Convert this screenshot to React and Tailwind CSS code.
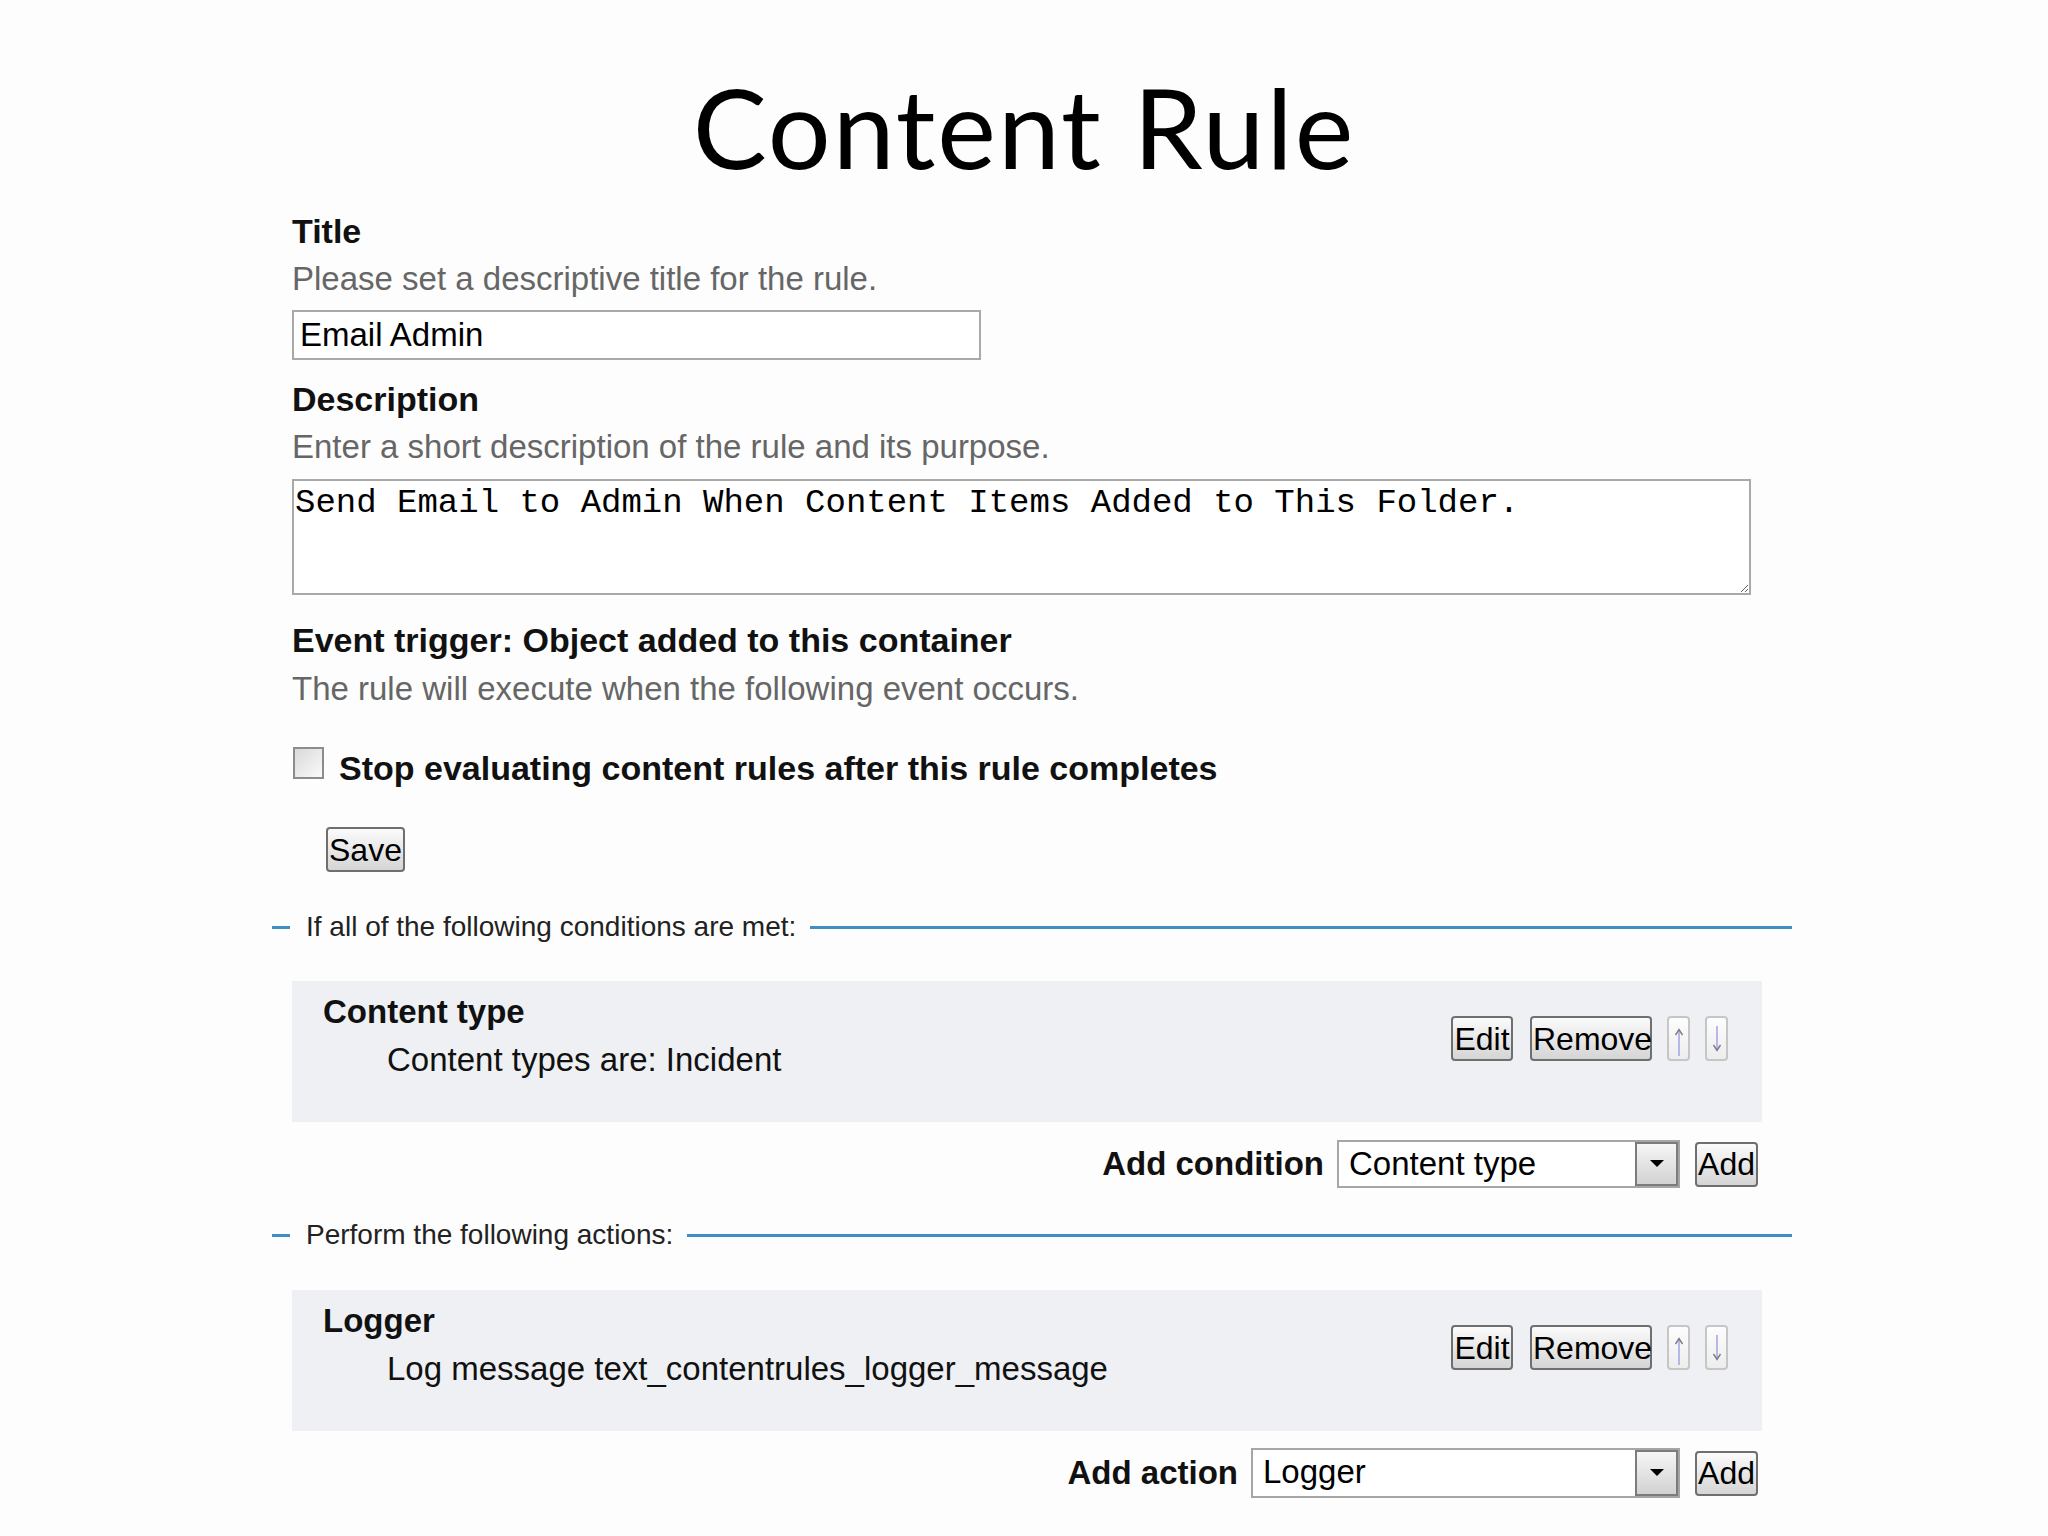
import React from "react";

const Btn = ({ children, className = "" }) => (
  <button
    className={
      "h-[45px] rounded-[4px] border-2 border-[#6f6f6f] bg-linear-to-b from-[#fbfbfb] to-[#d5d5d5] px-[1px] text-[32px] leading-none text-black " +
      className
    }
  >
    {children}
  </button>
);

const ArrowBtn = ({ up, className = "" }) => (
  <div
    className={
      "flex h-[45px] w-[23px] items-center justify-center rounded-[4px] border-2 border-[#c6c6c6] bg-linear-to-b from-[#fdfdfd] to-[#ededed] " +
      className
    }
  >
    <svg width="14" height="38" viewBox="0 0 14 38">
      {up ? (
        <>
          <line x1="7" y1="36" x2="7" y2="10" stroke="#a7a7e6" strokeWidth="1.6" />
          <path d="M3.5 15 L7 9.5 L10.5 15" fill="none" stroke="#7a7a8a" strokeWidth="1.4" />
        </>
      ) : (
        <>
          <line x1="7" y1="6" x2="7" y2="30" stroke="#a7a7e6" strokeWidth="1.6" />
          <path d="M3.5 25 L7 30.5 L10.5 25" fill="none" stroke="#7a7a8a" strokeWidth="1.4" />
        </>
      )}
    </svg>
  </div>
);

const Select = ({ value, className = "" }) => (
  <div className={"flex border-2 border-[#a6a6a6] bg-white " + className}>
    <div className="flex-1 pl-[10px] text-[33px] leading-[44px] text-black">{value}</div>
    <div className="flex w-[43px] items-center justify-center border-2 border-[#7c7c7c] bg-linear-to-b from-[#f6f6f6] to-[#d2d2d2]">
      <svg width="14" height="8" viewBox="0 0 14 8">
        <path d="M0 0 H14 L7 7 Z" fill="#000" />
      </svg>
    </div>
  </div>
);

const Legend = ({ children, className = "" }) => (
  <div className={"flex h-[40px] items-center " + className}>
    <div className="h-[3px] w-[18px] bg-[#3f8fc6]" />
    <div className="ml-[16px] text-[28px] leading-[40px] text-[#222]">{children}</div>
    <div className="ml-[14px] h-[3px] flex-1 bg-[#3f8fc6]" />
  </div>
);

const RuleBox = ({ title, text, className = "" }) => (
  <div className={"ml-[20px] flex h-[141px] w-[1470px] justify-between bg-[#eef0f3] " + className}>
    <div className="pl-[31px] pt-[11px]">
      <div className="text-[33px] font-bold leading-[40px]">{title}</div>
      <div className="ml-[64px] mt-[8px] text-[33px] leading-[40px]">{text}</div>
    </div>
    <div className="flex items-start pr-[34px] pt-[35px]">
      <Btn className="w-[62px]">Edit</Btn>
      <Btn className="ml-[17px] w-[122px]">Remove</Btn>
      <ArrowBtn up className="ml-[15px]" />
      <ArrowBtn className="ml-[15px]" />
    </div>
  </div>
);

export default function App() {
  return (
    <div className="min-h-[1536px] bg-[#fdfdfd] font-['Liberation_Sans',Arial,sans-serif] text-[#111]">
      <h1 className="pt-[61px] text-center font-['Lato',sans-serif] text-[111px] font-normal leading-[130px] tracking-[2px] text-black">
        Content Rule
      </h1>

      <div className="ml-[272px] w-[1520px]">
        <div className="pl-[20px]">
          <div className="mt-[20px] text-[34px] font-bold leading-[40px]">Title</div>
          <div className="mt-[8px] text-[33px] leading-[40px] text-[#666]">
            Please set a descriptive title for the rule.
          </div>
          <input
            readOnly
            defaultValue="Email Admin"
            className="mt-[11px] block h-[50px] w-[689px] border-2 border-[#a9a9a9] bg-white px-[6px] text-[33px] text-black outline-none"
          />

          <div className="mt-[19px] text-[34px] font-bold leading-[40px]">Description</div>
          <div className="mt-[8px] text-[33px] leading-[40px] text-[#666]">
            Enter a short description of the rule and its purpose.
          </div>
          <textarea
            readOnly
            defaultValue="Send Email to Admin When Content Items Added to This Folder."
            className="mt-[12px] block h-[116px] w-[1459px] border-2 border-[#a9a9a9] bg-white pl-[1px] pt-[4px] font-['Liberation_Mono','Courier_New',monospace] text-[34px] leading-[36px] text-black outline-none"
          />

          <div className="mt-[25px] text-[34px] font-bold leading-[40px]">
            Event trigger: Object added to this container
          </div>
          <div className="mt-[9px] text-[33px] leading-[40px] text-[#666]">
            The rule will execute when the following event occurs.
          </div>

          <div className="mt-[34px] flex h-[45px] items-start">
            <div className="ml-[1px] mt-[4px] h-[32px] w-[31px] border-2 border-[#8c8c8c] bg-linear-to-br from-[#d9d9d9] to-[#fafafa]" />
            <div className="ml-[15px] mt-[5px] text-[34px] font-bold leading-[40px]">
              Stop evaluating content rules after this rule completes
            </div>
          </div>

          <Btn className="mt-[39px] ml-[34px] h-[44px]">Save</Btn>
        </div>

        <Legend className="mt-[35px]">If all of the following conditions are met:</Legend>

        <RuleBox className="mt-[34px]" title="Content type" text="Content types are: Incident" />

        <div className="mt-[18px] flex h-[48px] w-[1490px] items-center justify-end pr-[4px]">
          <div className="text-[33px] font-bold leading-[40px]">Add condition</div>
          <Select value="Content type" className="ml-[13px] h-[48px] w-[343px]" />
          <Btn className="ml-[15px] w-[63px]">Add</Btn>
        </div>

        <Legend className="mt-[27px]">Perform the following actions:</Legend>

        <RuleBox
          className="mt-[35px]"
          title="Logger"
          text="Log message text_contentrules_logger_message"
        />

        <div className="mt-[17px] flex h-[50px] w-[1490px] items-center justify-end pr-[4px]">
          <div className="text-[33px] font-bold leading-[40px]">Add action</div>
          <Select value="Logger" className="ml-[13px] h-[50px] w-[429px]" />
          <Btn className="ml-[15px] w-[63px]">Add</Btn>
        </div>
      </div>
    </div>
  );
}
